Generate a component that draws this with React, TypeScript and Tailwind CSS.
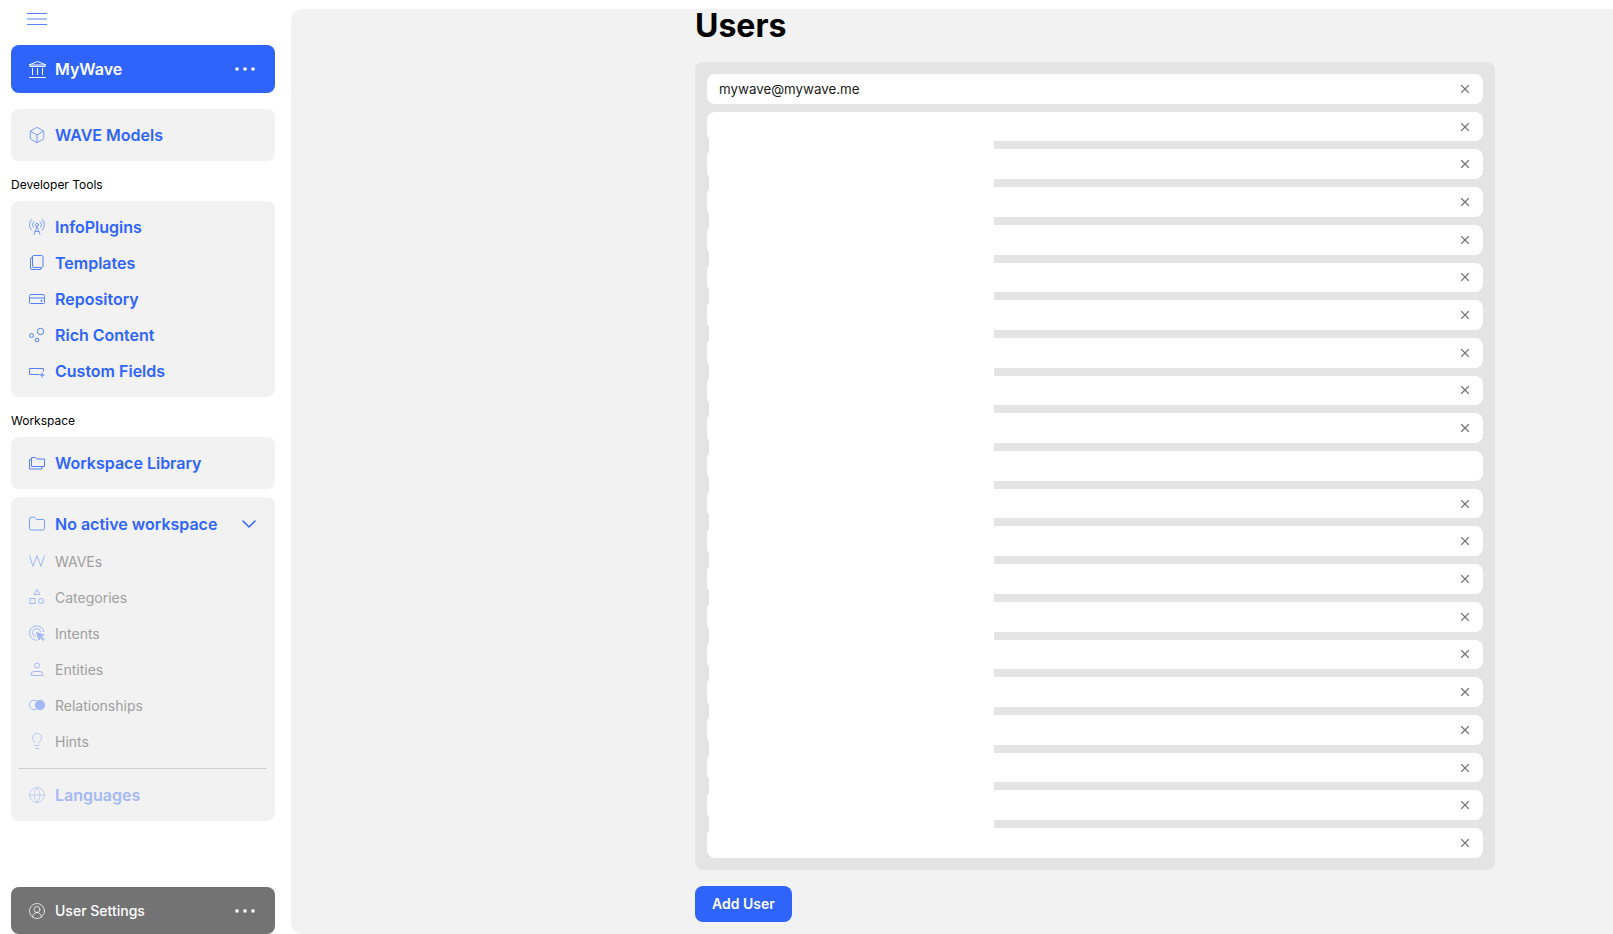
import { Box, ChevronDown, Globe, Lightbulb, RadioTower, X, Folder, CircleUserRound } from 'lucide-react';
import type { ReactNode } from 'react';

const IconMenu = () => (
    <svg width="20" height="12" viewBox="0 0 20 12" fill="none" stroke="currentColor" strokeWidth="1">
        <path d="M0 .5h20M0 6h20M0 11.500h20" />
    </svg>
);

const IconDots = () => (
    <svg width="20" height="4" viewBox="0 0 20 4" fill="currentColor">
        <circle cx="2" cy="2" r="1.800" />
        <circle cx="10" cy="2" r="1.800" />
        <circle cx="18" cy="2" r="1.800" />
    </svg>
);

const IconBank = () => (
    <svg width="19" height="19" viewBox="0 0 19 19" fill="none" stroke="currentColor" strokeWidth="1">
        <path d="M1 5l8.500-3.500L18 5z" />
        <path d="M1.500 6.500h16M4.500 8v7M9.500 8v7M14.500 8v7M1 17.500h17" />
    </svg>
);

const IconDrive = () => (
    <svg width="18" height="18" viewBox="0 0 18 18" fill="none" stroke="currentColor" strokeWidth="1">
        <path d="M3 4.500h12a2 2 0 0 1 1.500 2v6a1 1 0 0 1-1 1h-13a1 1 0 0 1-1-1v-6a2 2 0 0 1 1.500-2z" />
        <path d="M1.500 8h15" />
        <circle cx="13.500" cy="10.800" r=".6" fill="currentColor" />
    </svg>
);

const IconCopy = () => (
    <svg width="18" height="18" viewBox="0 0 18 18" fill="none" stroke="currentColor" strokeWidth="1">
        <rect x="4.500" y="1.500" width="10.500" height="12" rx="1.500" />
        <path d="M4.500 3.500h-.5a1.500 1.500 0 0 0-1.500 1.500v9a1.500 1.500 0 0 0 1.500 1.500h8a1.500 1.500 0 0 0 1.500-1.500" />
    </svg>
);

const IconBubbles = () => (
    <svg width="18" height="18" viewBox="0 0 18 18" fill="none" stroke="currentColor" strokeWidth="1">
        <circle cx="12.500" cy="5.500" r="3.200" />
        <circle cx="3.500" cy="9.500" r="2" />
        <circle cx="9" cy="14" r="1.800" />
    </svg>
);

const IconField = () => (
    <svg width="18" height="18" viewBox="0 0 18 18" fill="none" stroke="currentColor" strokeWidth="1">
        <path d="M11 12.500H1.500v-6h14v3" />
        <path d="M14 10.500v5M11.500 13h5" />
    </svg>
);

const IconFolders = () => (
    <svg width="18" height="18" viewBox="0 0 18 18" fill="none" stroke="currentColor" strokeWidth="1">
        <path d="M3.500 12.500v-9h4l1.500 1.500h7.500v7.500z" />
        <path d="M3.500 5.500h-2v9.500h12.500v-2.500" />
    </svg>
);

const IconWave = () => (
    <svg width="18" height="18" viewBox="0 0 18 18" fill="none" stroke="currentColor" strokeWidth="1">
        <path d="M1.500 3.500l3.500 11 4-11 4 11 3.500-11" />
    </svg>
);

const IconShapes = () => (
    <svg width="18" height="18" viewBox="0 0 18 18" fill="none" stroke="currentColor" strokeWidth="1">
        <path d="M9 1.500l3 5H6z" />
        <rect x="2" y="10.500" width="5" height="5" />
        <circle cx="13" cy="13" r="2.500" />
    </svg>
);

const IconTarget = () => (
    <svg width="18" height="18" viewBox="0 0 18 18" fill="none" stroke="currentColor" strokeWidth="1">
        <path d="M15.800 8a7.200 7.200 0 1 0-6.800 8.200" />
        <path d="M12.500 8a4 4 0 1 0-4.500 4.500" />
        <path d="M8.500 8.500l7.500 2.500-3 1.200 3 3.300-1 1-3-3.300-1 2.800z" fill="currentColor" />
    </svg>
);

const IconEntity = () => (
    <svg width="18" height="18" viewBox="0 0 18 18" fill="none" stroke="currentColor" strokeWidth="1">
        <circle cx="9" cy="5.500" r="2.500" />
        <path d="M3 15.500v-1a3 3 0 0 1 3-3h6a3 3 0 0 1 3 3v1z" />
    </svg>
);

const IconRelation = () => (
    <svg width="18" height="18" viewBox="0 0 18 18" stroke="currentColor" strokeWidth="1">
        <circle cx="6" cy="9" r="4.700" fill="none" />
        <circle cx="12" cy="9" r="4.700" fill="currentColor" />
    </svg>
);

const NavRow = ({ icon, label }: { icon: ReactNode; label: string }) => (
    <div className="flex items-center h-[36px] pl-[17px] gap-[9px]">
        <span className="w-[18px] flex justify-center text-[#2e64fa] opacity-80">{icon}</span>
        <span className="text-[16px] font-semibold text-[#2e64fa]">{label}</span>
    </div>
);

const SubRow = ({ icon, label }: { icon: ReactNode; label: string }) => (
    <div className="flex items-center h-[36px] pl-[17px] gap-[9px]">
        <span className="w-[18px] flex justify-center text-[#2e64fa] opacity-40">{icon}</span>
        <span className="text-[14px] text-[#a0a0a0]">{label}</span>
    </div>
);

const thin = { size: 18, strokeWidth: 1 };

const devTools = [
    { icon: <RadioTower {...thin} />, label: 'InfoPlugins' },
    { icon: <IconCopy />, label: 'Templates' },
    { icon: <IconDrive />, label: 'Repository' },
    { icon: <IconBubbles />, label: 'Rich Content' },
    { icon: <IconField />, label: 'Custom Fields' },
];

const workspaceItems = [
    { icon: <IconWave />, label: 'WAVEs' },
    { icon: <IconShapes />, label: 'Categories' },
    { icon: <IconTarget />, label: 'Intents' },
    { icon: <IconEntity />, label: 'Entities' },
    { icon: <IconRelation />, label: 'Relationships' },
    { icon: <Lightbulb {...thin} />, label: 'Hints' },
];

const users = [
    'mywave@mywave.me', '', '', '', '', '', '', '', '', '', '', '', '', '', '', '', '', '', '', '', '',
];

const Sidebar = () => (
    <aside className="w-[291px] shrink-0 h-full flex flex-col pl-[11px] pr-[16px]">
        <div className="h-[45px] pl-[16px] pt-[13px] text-[#2e64fa] opacity-80">
            <IconMenu />
        </div>
        <div className="h-[48px] rounded-lg bg-[#2e64fa] flex items-center pl-[17px] pr-[20px] gap-[8px] text-white">
            <IconBank />
            <span className="text-[16px] font-semibold flex-1">MyWave</span>
            <IconDots />
        </div>
        <div className="mt-[16px] h-[52px] rounded-lg bg-[#f2f2f2] flex items-center">
            <NavRow icon={<Box {...thin} />} label="WAVE Models" />
        </div>
        <div className="mt-[14px] h-[20px] text-[12px] leading-[20px] text-black">Developer Tools</div>
        <div className="mt-[6px] rounded-lg bg-[#f2f2f2] py-[8px]">
            {devTools.map((item) => (
                <NavRow key={item.label} icon={item.icon} label={item.label} />
            ))}
        </div>
        <div className="mt-[14px] h-[20px] text-[12px] leading-[20px] text-black">Workspace</div>
        <div className="mt-[6px] h-[52px] rounded-lg bg-[#f2f2f2] flex items-center">
            <NavRow icon={<IconFolders />} label="Workspace Library" />
        </div>
        <div className="mt-[8px] rounded-lg bg-[#f2f2f2] pt-[9px]">
            <div className="flex items-center justify-between pr-[14px] mb-[1px]">
                <NavRow icon={<Folder {...thin} />} label="No active workspace" />
                <ChevronDown size={24} strokeWidth={1.500} className="text-[#2e64fa]" />
            </div>
            {workspaceItems.map((item) => (
                <SubRow key={item.label} icon={item.icon} label={item.label} />
            ))}
            <div className="mx-[8px] mt-[9px] border-t border-[#cfcfcf]" />
            <div className="h-[52px] flex items-center opacity-40">
                <NavRow icon={<Globe {...thin} />} label="Languages" />
            </div>
        </div>
        <div className="mt-auto h-[47px] rounded-lg bg-[#737373] flex items-center pl-[17px] pr-[20px] gap-[9px] text-white">
            <CircleUserRound {...thin} />
            <span className="text-[14px] font-medium flex-1">User Settings</span>
            <IconDots />
        </div>
    </aside>
);

const UserRow = ({ email, removable }: { email: string; removable: boolean }) => (
    <div className="h-[29.71px] shrink-0 rounded-lg bg-white flex items-center justify-between pl-[12px] pr-[11px]">
        <span className="text-[13.33px] text-[#1a1a1a] pt-[2px]">{email}</span>
        {removable && <X size={14} strokeWidth={2} className="text-[#777777]" />}
    </div>
);

export default function App() {
    return (
        <div className="h-screen w-full flex bg-white overflow-hidden font-['Inter',sans-serif]">
            <Sidebar />
            <main className="flex-1 mt-[9px] rounded-l-xl bg-[#f2f2f2] pl-[404px]">
                <div className="w-[800px]">
                    <h1 className="text-[32px] leading-[36px] font-bold text-black h-[53px] -mt-[1px] mb-[1px]">Users</h1>
                    <div className="relative rounded-lg bg-[#e4e4e4] p-[12px] flex flex-col gap-2">
                        {users.map((email, i) => (
                            <UserRow key={i} email={email} removable={i !== 10} />
                        ))}
                        {/* blanked out addresses */}
                        <div className="absolute left-[14px] top-[56px] w-[285px] h-[730px] bg-white" />
                    </div>
                    <button className="mt-[16px] w-[97px] h-[36px] rounded-lg bg-[#2e64fa] text-white text-[14px] font-semibold">
                        Add User
                    </button>
                </div>
            </main>
        </div>
    );
}
